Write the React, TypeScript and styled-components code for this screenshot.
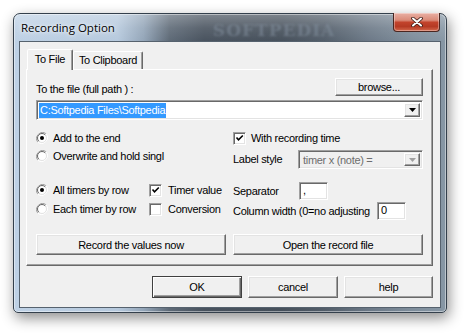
import React from "react";
import styled, { createGlobalStyle, css } from "styled-components";

const GlobalStyle = createGlobalStyle`
  html, body { margin: 0; padding: 0; background: #ffffff; }
  body { font-family: "Liberation Sans", Arial, sans-serif; font-size: 11px; letter-spacing: -0.3px; color: #000; }
  * { box-sizing: border-box; }
`;

const raised = css`
  border: 1px solid;
  border-color: #ffffff #696969 #696969 #ffffff;
  box-shadow: inset -1px -1px 0 #a0a0a0, inset 1px 1px 0 #e3e3e3;
`;

const sunken = css`
  border: 1px solid;
  border-color: #a0a0a0 #ffffff #ffffff #a0a0a0;
  box-shadow: inset 1px 1px 0 #696969, inset -1px -1px 0 #e3e3e3;
`;

const Page = styled.div`
  padding: 13px 0 0 13px;
  height: 335px;
  overflow: hidden;
`;

const Window = styled.div`
  width: 434px;
  height: 300px;
  display: flex;
  flex-direction: column;
  padding: 0 5px 4px 5px;
  border: 1px solid #34404c;
  border-radius: 7px 7px 5px 5px;
  background:
    linear-gradient(180deg, rgba(255,255,255,0.3) 0px, rgba(255,255,255,0.1) 14px, rgba(255,255,255,0) 28px),
    linear-gradient(90deg, #bed1e5 0%, #b6c9dd 24%, #93a5b8 30%, #5d6976 36%, #48525e 44%, #46505b 62%, #525d69 72%, #6b7886 82%, #7e8d9b 92%, #8797a5 100%);
  box-shadow: inset 0 0 0 1px rgba(255,255,255,0.45), 2px 5px 14px rgba(0,0,0,0.45);
`;

const TitleBar = styled.div`
  height: 27px;
  display: flex;
  align-items: center;
  padding-left: 2px;
`;

const TitleText = styled.span`
  font-family: "Open Sans", "Noto Sans", sans-serif;
  font-size: 11.5px;
  letter-spacing: 0;
  color: #000;
  text-shadow: 0 0 6px rgba(255,255,255,0.9), 0 0 3px rgba(255,255,255,0.8);
`;

const Watermark = styled.span`
  margin-left: 98px;
  margin-top: 4px;
  font-family: "DejaVu Serif", serif;
  font-weight: bold;
  font-size: 17px;
  letter-spacing: 1px;
  color: rgba(130, 142, 156, 0.55);
  filter: blur(1.2px);
`;

const CloseButton = styled.div`
  margin-left: auto;
  margin-right: 1px;
  align-self: flex-start;
  margin-top: -1px;
  width: 47px;
  height: 19px;
  border: 1px solid #4a2620;
  border-top: none;
  border-radius: 0 0 4px 4px;
  background: linear-gradient(180deg, #e9b0a4 0%, #da8a78 40%, #c2432c 52%, #b53a24 75%, #d3684c 100%);
  box-shadow: inset 0 0 0 1px rgba(255,255,255,0.35);
  display: flex;
  align-items: center;
  justify-content: center;
`;

const Client = styled.div`
  flex: 1;
  display: flex;
  flex-direction: column;
  background: #f0f0f0;
  border: 1px solid #56626e;
  padding: 7px 7px 9px 6px;
`;

const TabStrip = styled.div`
  height: 20px;
  display: flex;
  align-items: flex-end;
  padding-left: 1px;
`;

const Tab = styled.div<{ $active?: boolean; $w: number }>`
  width: ${(p) => p.$w}px;
  height: ${(p) => (p.$active ? 21 : 18)}px;
  margin-bottom: ${(p) => (p.$active ? -1 : 0)}px;
  position: relative;
  z-index: ${(p) => (p.$active ? 2 : 1)};
  background: #f0f0f0;
  border: 1px solid;
  border-bottom: none;
  border-color: #ffffff #696969 transparent #ffffff;
  box-shadow: inset -1px 0 0 #a0a0a0;
  border-radius: 2px 2px 0 0;
  display: flex;
  align-items: ${(p) => (p.$active ? "flex-start" : "center")};
  padding-top: ${(p) => (p.$active ? 3 : 0)}px;
  justify-content: center;
  line-height: 13px;
`;

const Pane = styled.div`
  height: 197px;
  display: flex;
  flex-direction: column;
  border: 1px solid;
  border-color: #ffffff #696969 #696969 #ffffff;
  box-shadow: inset -1px -1px 0 #a0a0a0;
  padding: 8px 9px 10px 9px;
`;

const TopRow = styled.div`
  height: 18px;
  display: flex;
  justify-content: space-between;
  align-items: flex-end;
`;

const Text = styled.span<{ $w?: number; $disabled?: boolean }>`
  line-height: 13px;
  white-space: nowrap;
  ${(p) => (p.$w ? `width: ${p.$w}px; flex: none;` : "")}
  color: ${(p) => (p.$disabled ? "#6d6d6d" : "#000")};
`;

const PushButton = styled.button<{ $w?: number; $h: number; $default?: boolean }>`
  ${raised};
  ${(p) => (p.$w ? `width: ${p.$w}px;` : "width: 100%;")}
  height: ${(p) => p.$h}px;
  background: #f0f0f0;
  font-family: "Liberation Sans", Arial, sans-serif;
  font-size: 11px;
  letter-spacing: -0.3px;
  color: #000;
  padding: 0;
  ${(p) =>
    p.$default &&
    css`
      border: 1px solid #404040;
      box-shadow: inset 1px 1px 0 #ffffff, inset -1px -1px 0 #696969, inset -2px -2px 0 #a0a0a0;
    `}
`;

const Combo = styled.div<{ $w?: number; $h: number; $disabled?: boolean }>`
  ${sunken};
  ${(p) => (p.$w ? `width: ${p.$w}px;` : "width: 100%;")}
  height: ${(p) => p.$h}px;
  background: ${(p) => (p.$disabled ? "#f0f0f0" : "#ffffff")};
  display: flex;
  align-items: center;
  padding: 2px;
`;

const Selection = styled.span`
  background: #3399ff;
  color: #ffffff;
  line-height: 15px;
  padding: 0 1px;
  white-space: nowrap;
`;

const ComboValue = styled.span`
  color: #6d6d6d;
  padding-left: 2px;
  white-space: nowrap;
`;

const DropButton = styled.div`
  ${raised};
  margin-left: auto;
  width: 16px;
  height: 100%;
  display: flex;
  align-items: center;
  justify-content: center;
  background: #f0f0f0;
`;

const OptionsGrid = styled.div`
  display: grid;
  grid-template-columns: 190px 190px;
  column-gap: 7px;
  margin-top: 9px;
  align-items: start;
`;

const Column = styled.div`
  display: flex;
  flex-direction: column;
`;

const Row = styled.div<{ $mt?: number; $h?: number; $gap?: number }>`
  display: flex;
  align-items: center;
  height: ${(p) => p.$h ?? 18}px;
  margin-top: ${(p) => p.$mt ?? 0}px;
  gap: ${(p) => p.$gap ?? 0}px;
`;

const TimersGrid = styled.div`
  display: grid;
  grid-template-columns: 113px 77px;
  grid-auto-rows: 18px;
  row-gap: 1px;
  margin-top: 16px;
`;

const CheckBox = styled.span`
  ${sunken};
  width: 13px;
  height: 13px;
  flex: none;
  background: #ffffff;
  display: flex;
  align-items: center;
  justify-content: center;
`;

const TextBox = styled.div<{ $w: number }>`
  ${sunken};
  width: ${(p) => p.$w}px;
  height: 18px;
  background: #ffffff;
  padding: 0 3px;
  line-height: 14px;
  flex: none;
`;

const ButtonRow = styled.div`
  display: grid;
  grid-template-columns: 190px 190px;
  column-gap: 7px;
  margin-top: 14px;
`;

const BottomRow = styled.div`
  display: flex;
  justify-content: flex-end;
  gap: 6px;
  margin-top: 10px;
`;

const RadioIcon: React.FC<{ checked?: boolean }> = ({ checked }) => (
  <svg width="12" height="12" viewBox="0 0 12 12" style={{ flex: "none" }}>
    <path d="M10.2 1.8 A6 6 0 0 0 1.8 10.2" fill="none" stroke="#a0a0a0" strokeWidth="1" />
    <path d="M1.8 10.2 A6 6 0 0 0 10.2 1.8" fill="none" stroke="#ffffff" strokeWidth="1" />
    <circle cx="6" cy="6" r="4.5" fill="#ffffff" stroke="#e3e3e3" strokeWidth="1" />
    <path d="M9.2 2.8 A4.5 4.5 0 0 0 2.8 9.2" fill="none" stroke="#696969" strokeWidth="1" />
    {checked && <circle cx="6" cy="6" r="2" fill="#000" />}
  </svg>
);

const Check: React.FC<{ checked?: boolean }> = ({ checked }) => (
  <CheckBox>
    {checked && (
      <svg width="9" height="9" viewBox="0 0 9 9">
        <path d="M1.5 3.5 L3.5 5.8 L7.8 1.5" fill="none" stroke="#000" strokeWidth="1.6" />
      </svg>
    )}
  </CheckBox>
);

const Arrow: React.FC<{ disabled?: boolean }> = ({ disabled }) => (
  <svg width="7" height="4" viewBox="0 0 7 4">
    <path d="M0 0 H7 L3.5 4 Z" fill={disabled ? "#a0a0a0" : "#000"} />
  </svg>
);

const CloseGlyph = () => (
  <svg width="12" height="10" viewBox="0 0 12 10">
    <path d="M2 1.5 L10 8.5 M10 1.5 L2 8.5" stroke="#3a1a14" strokeWidth="3.6" strokeLinecap="round" />
    <path d="M2 1.5 L10 8.5 M10 1.5 L2 8.5" stroke="#ffffff" strokeWidth="2" strokeLinecap="round" />
  </svg>
);

export default function App() {
  return (
    <>
      <GlobalStyle />
      <Page>
        <Window>
          <TitleBar>
            <TitleText>Recording Option</TitleText>
            <Watermark>SOFTPEDIA</Watermark>
            <CloseButton>
              <CloseGlyph />
            </CloseButton>
          </TitleBar>
          <Client>
            <TabStrip>
              <Tab $active $w={46}>To File</Tab>
              <Tab $w={70}>To Clipboard</Tab>
            </TabStrip>
            <Pane>
              <TopRow>
                <Text>To the file (full path ) :</Text>
                <PushButton $w={88} $h={18}>browse...</PushButton>
              </TopRow>
              <Row $mt={4} $h={20}>
                <Combo $h={20}>
                  <Selection>C:Softpedia Files\Softpedia</Selection>
                  <DropButton>
                    <Arrow />
                  </DropButton>
                </Combo>
              </Row>
              <OptionsGrid>
                <Column>
                  <Row $gap={5}>
                    <RadioIcon checked />
                    <Text>Add to the end</Text>
                  </Row>
                  <Row $gap={5}>
                    <RadioIcon />
                    <Text>Overwrite and hold singl</Text>
                  </Row>
                  <TimersGrid>
                    <Row $gap={5}>
                      <RadioIcon checked />
                      <Text>All timers by row</Text>
                    </Row>
                    <Row $gap={6}>
                      <Check checked />
                      <Text>Timer value</Text>
                    </Row>
                    <Row $gap={5}>
                      <RadioIcon />
                      <Text>Each timer by row</Text>
                    </Row>
                    <Row $gap={6}>
                      <Check />
                      <Text>Conversion</Text>
                    </Row>
                  </TimersGrid>
                </Column>
                <Column>
                  <Row $gap={5}>
                    <Check checked />
                    <Text>With recording time</Text>
                  </Row>
                  <Row $mt={3} $h={19}>
                    <Text $w={65}>Label style</Text>
                    <Combo $w={125} $h={19} $disabled>
                      <ComboValue>timer x (note) =</ComboValue>
                      <DropButton>
                        <Arrow disabled />
                      </DropButton>
                    </Combo>
                  </Row>
                  <Row $mt={13}>
                    <Text $w={66}>Separator</Text>
                    <TextBox $w={29}>,</TextBox>
                  </Row>
                  <Row $mt={2}>
                    <Text $w={144}>Column width (0=no adjusting</Text>
                    <TextBox $w={29}>0</TextBox>
                  </Row>
                </Column>
              </OptionsGrid>
              <ButtonRow>
                <PushButton $h={21}>Record the values now</PushButton>
                <PushButton $h={21}>Open the record file</PushButton>
              </ButtonRow>
            </Pane>
            <BottomRow>
              <PushButton $w={90} $h={22} $default>OK</PushButton>
              <PushButton $w={90} $h={22}>cancel</PushButton>
              <PushButton $w={89} $h={22}>help</PushButton>
            </BottomRow>
          </Client>
        </Window>
      </Page>
    </>
  );
}
